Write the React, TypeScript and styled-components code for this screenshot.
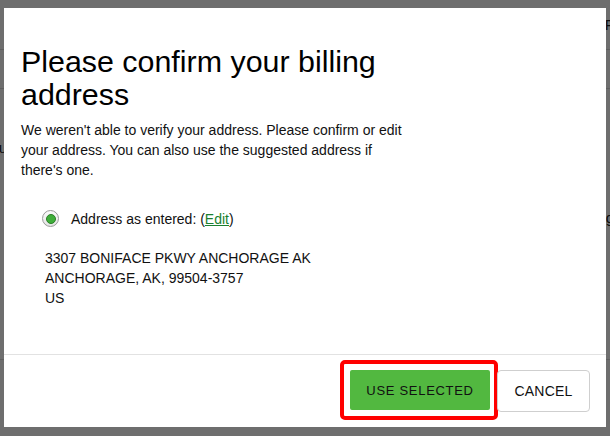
import React, { useState } from "react";
import styled, { createGlobalStyle } from "styled-components";

const GlobalStyle = createGlobalStyle`
  html, body {
    margin: 0;
    padding: 0;
    width: 610px;
    height: 436px;
    overflow: hidden;
    background: #ffffff;
    font-family: "Liberation Sans", Arial, sans-serif;
    color: #111;
  }
`;

type PageRowData = { h: number; line?: boolean; left?: React.ReactNode; right?: string };

export default function App() {
  const [selected, setSelected] = useState<boolean>(true);

  // rows of the page lying under the dialog; only their edges show
  const pageRows: PageRowData[] = [
    { h: 50, line: true, right: "F" },
    { h: 39, line: true },
    { h: 40 },
    { h: 38, left: "you" },
    { h: 34 },
    { h: 34, right: "g" },
    { h: 20, left: <><Req>*</Req>]</> },
    { h: 35 },
    { h: 20, left: "a" },
    { h: 50, line: true },
  ];

  return (
    <>
      <GlobalStyle />
      <Page>
        {pageRows.map((r, i) => (
          <PageRow key={i} $h={r.h} $line={r.line}>
            <LeftCell>{r.left}</LeftCell>
            <RightCell>{r.right}</RightCell>
          </PageRow>
        ))}
      </Page>

      <Overlay>
        <Modal>
          <Body>
            <Title>Please confirm your billing address</Title>
            <Intro>
              We weren't able to verify your address. Please confirm or edit
              your address. You can also use the suggested address if
              there's one.
            </Intro>

            <Option onClick={() => setSelected(true)}>
              <Radio $checked={selected} />
              <span>
                Address as entered: (<EditLink href="#">Edit</EditLink>)
              </span>
            </Option>

            <Address>
              3307 BONIFACE PKWY ANCHORAGE AK
              <br />
              ANCHORAGE, AK, 99504-3757
              <br />
              US
            </Address>
          </Body>

          <Footer>
            <Highlight>
              <PrimaryBtn>USE SELECTED</PrimaryBtn>
            </Highlight>
            <SecondaryBtn>CANCEL</SecondaryBtn>
          </Footer>
        </Modal>
      </Overlay>
    </>
  );
}

const Page = styled.div`
  display: flex;
  flex-direction: column;
  width: 610px;
`;

const PageRow = styled.div<{ $h: number; $line?: boolean }>`
  display: flex;
  justify-content: space-between;
  align-items: center;
  height: ${(p) => p.$h}px;
  box-sizing: border-box;
  border-bottom: 1px solid ${(p) => (p.$line ? "#dcdcdc" : "transparent")};
  font-size: 15px;
  color: #222;
  overflow: hidden;
`;

const LeftCell = styled.span`
  margin-left: -17px;
  white-space: nowrap;
`;

const RightCell = styled.span`
  margin-right: -4px;
  white-space: nowrap;
`;

const Req = styled.span`
  color: #b00020;
`;

const Overlay = styled.div`
  position: fixed;
  inset: 0;
  background: rgba(0, 0, 0, 0.57);
  padding: 8px 4px 9px 4px;
  box-sizing: border-box;
`;

const Modal = styled.div`
  display: flex;
  flex-direction: column;
  justify-content: space-between;
  width: 602px;
  height: 419px;
  background: #ffffff;
  box-sizing: border-box;
`;

const Body = styled.div`
  display: flex;
  flex-direction: column;
  padding: 37px 17px 0 17px;
`;

const Title = styled.h2`
  margin: 0;
  max-width: 390px;
  font-size: 30.4px;
  font-weight: 400;
  line-height: 33px;
  color: #000;
`;

const Intro = styled.p`
  margin: 9px 0 0 0;
  max-width: 390px;
  font-size: 14px;
  line-height: 20px;
  color: #111;
`;

const Option = styled.label`
  display: flex;
  align-items: center;
  gap: 12px;
  margin: 30px 0 0 21px;
  font-size: 14px;
  color: #111;
  cursor: pointer;
`;

const Radio = styled.span<{ $checked: boolean }>`
  display: inline-flex;
  align-items: center;
  justify-content: center;
  width: 17px;
  height: 17px;
  border-radius: 50%;
  border: 1px solid #9a9a9a;
  background: linear-gradient(#fafafa, #e4e4e4);
  box-sizing: border-box;

  &::after {
    content: "";
    width: 10px;
    height: 10px;
    border-radius: 50%;
    background: ${(p) => (p.$checked ? "#3fae3a" : "transparent")};
    border: 1px solid ${(p) => (p.$checked ? "#2a7f26" : "transparent")};
    box-sizing: border-box;
  }
`;

const EditLink = styled.a`
  color: #1a7f2e;
  text-decoration: underline;
`;

const Address = styled.div`
  margin: 21px 0 0 24px;
  font-size: 14px;
  line-height: 20px;
  color: #111;
`;

const Footer = styled.div`
  display: flex;
  justify-content: flex-end;
  align-items: center;
  height: 73px;
  padding-right: 16px;
  border-top: 1px solid #e2e2e2;
  box-sizing: border-box;
`;

const Highlight = styled.div`
  display: flex;
  padding: 6px 4px 6px 6px;
  border: 4px solid #ff0000;
  border-radius: 5px;
  margin-top: -2px;
`;

const PrimaryBtn = styled.button`
  width: 140px;
  height: 40px;
  border: 0;
  border-radius: 2px;
  background: #52b840;
  color: #111;
  font-family: "Liberation Sans", Arial, sans-serif;
  font-size: 13px;
  letter-spacing: 0.7px;
  cursor: pointer;
`;

const SecondaryBtn = styled.button`
  width: 93px;
  height: 42px;
  margin-left: -1px;
  border: 1px solid #cfcfcf;
  border-radius: 4px;
  background: #ffffff;
  color: #111;
  font-family: "Liberation Sans", Arial, sans-serif;
  font-size: 14px;
  letter-spacing: 0.2px;
  cursor: pointer;
`;
